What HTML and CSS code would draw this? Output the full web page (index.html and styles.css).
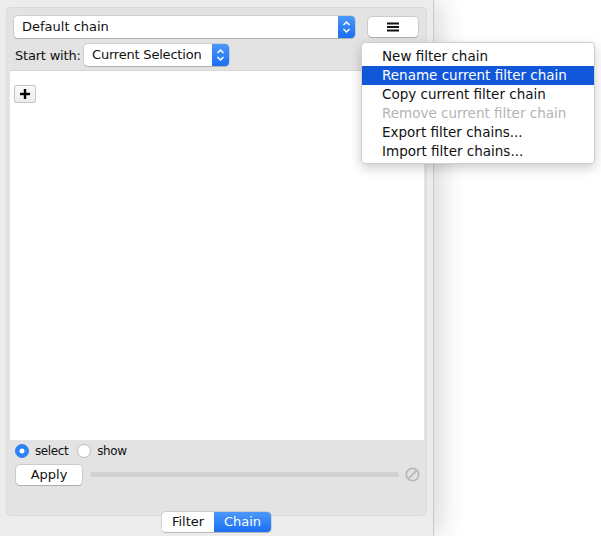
FILE: index.html
```html
<!DOCTYPE html>
<html>
<head>
<meta charset="utf-8">
<link rel="stylesheet" href="styles.css">
</head>
<body>
<div class="window">
  <div class="group">
    <div class="top-row">
      <div class="combo combo-wide">
        <span class="combo-text">Default chain</span>
        <span class="combo-arrows"><svg width="9" height="14" viewBox="0 0 9 14"><path d="M1.5 5 L4.5 2 L7.5 5 M1.5 9 L4.5 12 L7.5 9" fill="none" stroke="#fff" stroke-width="1.5"/></svg></span>
      </div>
      <div class="btn menu-btn"><svg width="12" height="10" viewBox="0 0 12 10"><rect x="0" y="0.5" width="12" height="2" fill="#111"/><rect x="0" y="4" width="12" height="2" fill="#111"/><rect x="0" y="7.5" width="12" height="2" fill="#111"/></svg></div>
    </div>
    <div class="start-row">
      <span class="label">Start with:</span>
      <div class="combo combo-small">
        <span class="combo-text">Current Selection</span>
        <span class="combo-arrows"><svg width="9" height="14" viewBox="0 0 9 14"><path d="M1.5 5 L4.5 2 L7.5 5 M1.5 9 L4.5 12 L7.5 9" fill="none" stroke="#fff" stroke-width="1.5"/></svg></span>
      </div>
    </div>
    <div class="list">
      <div class="plus-btn"><svg width="10" height="10" viewBox="0 0 10 10"><rect x="3.8" y="0" width="2.4" height="10" fill="#000"/><rect x="0" y="3.8" width="10" height="2.4" fill="#000"/></svg></div>
    </div>
    <div class="radio-row">
      <span class="radio on"></span><span class="rlabel">select</span>
      <span class="radio"></span><span class="rlabel">show</span>
    </div>
    <div class="apply-row">
      <div class="btn apply">Apply</div>
      <div class="track"></div>
      <svg class="noentry" width="15" height="15" viewBox="0 0 15 15"><circle cx="7.5" cy="7.5" r="6.2" fill="none" stroke="#b9b9b9" stroke-width="1.8"/><line x1="3.2" y1="11.8" x2="11.8" y2="3.2" stroke="#b9b9b9" stroke-width="1.8"/></svg>
    </div>
  </div>
  <div class="seg">
    <span class="seg-item">Filter</span><span class="seg-item active">Chain</span>
  </div>
</div>
<div class="menu">
  <div class="mi">New filter chain</div>
  <div class="mi sel">Rename current filter chain</div>
  <div class="mi">Copy current filter chain</div>
  <div class="mi dis">Remove current filter chain</div>
  <div class="mi">Export filter chains...</div>
  <div class="mi">Import filter chains...</div>
</div>
</body>
</html>
```
FILE: styles.css
```css
html, body {
  margin: 0;
  padding: 0;
  background: #fff;
  font-family: "DejaVu Sans", sans-serif;
  font-size: 13px;
  color: #111;
}
body {
  width: 601px;
  height: 536px;
  overflow: hidden;
  position: relative;
}
.window {
  width: 434px;
  height: 536px;
  background: #ececec;
  border-right: 1px solid #c9c9c9;
  box-shadow: 6px 0 26px rgba(0,0,0,0.16);
  padding: 7px 0 0 6px;
  box-sizing: border-box;
  display: flex;
  flex-direction: column;
}
.group {
  width: 421px;
  height: 509px;
  box-sizing: border-box;
  background: #e3e3e3;
  border: 1px solid #dadada;
  border-radius: 5px;
  display: flex;
  flex-direction: column;
  padding: 7px 2px 0 3px;
}
.top-row {
  display: flex;
  align-items: center;
  padding-left: 4px;
  height: 23px;
}
.combo {
  display: flex;
  align-items: stretch;
  background: #fff;
  border-radius: 4px;
  box-shadow: 0 0 0 0.5px rgba(0,0,0,0.18), 0 1px 1px rgba(0,0,0,0.15);
  height: 22px;
  box-sizing: border-box;
}
.combo-text {
  flex: 1;
  padding-left: 8px;
  line-height: 22px;
  white-space: nowrap;
}
.combo-arrows {
  width: 17px;
  background: linear-gradient(#4c98fb, #1b6ef2);
  border-radius: 0 4px 4px 0;
  display: flex;
  align-items: center;
  justify-content: center;
}
.combo-wide { width: 341px; }
.btn {
  background: #fff;
  border-radius: 4px;
  box-shadow: 0 0 0 0.5px rgba(0,0,0,0.2), 0 1px 1px rgba(0,0,0,0.15);
  display: flex;
  align-items: center;
  justify-content: center;
  box-sizing: border-box;
}
.menu-btn {
  width: 50px;
  height: 20px;
  margin-left: 13px;
}
.start-row {
  display: flex;
  align-items: center;
  margin-top: 6px;
  height: 22px;
  padding-left: 5px;
}
.label {
  width: 69px;
  letter-spacing: -0.2px;
  white-space: nowrap;
}
.combo-small { width: 145px; }
.combo-small .combo-text { letter-spacing: -0.2px; }
.list {
  margin-top: 4px;
  background: #fff;
  border-top: 1px solid #d6d6d6;
  height: 370px;
  box-sizing: border-box;
  padding: 14px 0 0 4px;
}
.plus-btn {
  width: 22px;
  height: 18px;
  box-sizing: border-box;
  border: 1px solid #c4c4c4;
  border-radius: 2px;
  background: linear-gradient(#fafafa, #ececec);
  display: flex;
  align-items: center;
  justify-content: center;
}
.radio-row {
  display: flex;
  align-items: center;
  height: 16px;
  margin-top: 3px;
  padding-left: 5px;
  font-size: 12px;
  letter-spacing: -0.4px;
}
.radio {
  width: 14px;
  height: 14px;
  box-sizing: border-box;
  border-radius: 50%;
  background: #fff;
  border: 1px solid #bdbdbd;
  margin-right: 6px;
}
.radio.on {
  background: radial-gradient(circle, #fff 0 2.2px, #2f82f5 2.8px);
  border-color: #2a7cf0;
}
.rlabel { margin-right: 9px; }
.apply-row {
  display: flex;
  align-items: center;
  margin-top: 5px;
  height: 21px;
  padding-left: 6px;
}
.apply {
  width: 66px;
  height: 20px;
}
.track {
  width: 309px;
  height: 5px;
  background: #d2d2d2;
  border-radius: 3px;
  margin-left: 8px;
}
.noentry { margin-left: 6px; }
.seg {
  display: flex;
  margin-top: -4px;
  margin-left: 156px;
  height: 20px;
  width: 109px;
  border-radius: 4px;
  overflow: hidden;
  box-shadow: 0 0 0 0.5px rgba(0,0,0,0.2), 0 1px 1px rgba(0,0,0,0.15);
}
.seg-item {
  display: flex;
  align-items: center;
  justify-content: center;
  background: #fff;
  width: 52px;
  line-height: 20px;
}
.seg-item.active {
  width: 57px;
  background: linear-gradient(#4c98fb, #1b6ef2);
  color: #fff;
}
.menu {
  position: absolute;
  left: 361px;
  top: 42px;
  width: 234px;
  height: 122px;
  box-sizing: border-box;
  background: #fff;
  border: 1px solid #d0d0d0;
  border-radius: 4px;
  box-shadow: 0 4px 12px rgba(0,0,0,0.2);
  padding-top: 4px;
  font-size: 13.5px;
}
.mi {
  height: 19px;
  line-height: 19px;
  padding-left: 20px;
  white-space: nowrap;
}
.mi.sel { background: #1157d9; color: #fff; }
.mi.dis { color: #b4b4b4; }
```
